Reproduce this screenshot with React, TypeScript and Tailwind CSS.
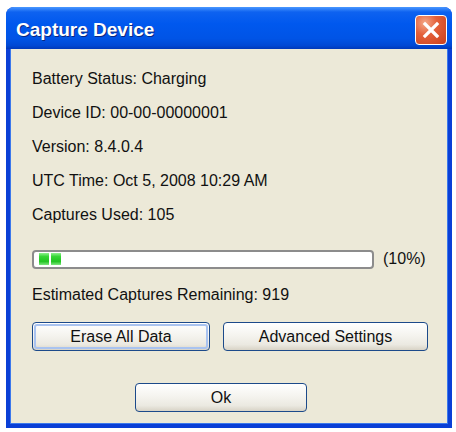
import React from "react";

const font = { fontFamily: '"Liberation Sans", Arial, sans-serif' };

function XpButton({ label, focused = false, className = "" }: { label: string; focused?: boolean; className?: string }) {
  return (
    <button
      type="button"
      className={`h-[29px] rounded-[4px] border border-[#1c4a8a] bg-[linear-gradient(180deg,#ffffff_0%,#f5f4ef_45%,#ebe9e1_80%,#d8d3c6_100%)] p-[1px] text-[16px] text-[#111] ${className}`}
    >
      <span
        className={`flex h-full w-full items-center justify-center rounded-[3px] ${
          focused ? "border-2 border-[#a9c3f0]" : "border-2 border-transparent"
        }`}
      >
        {label}
      </span>
    </button>
  );
}

function ProgressBar({ blocks }: { blocks: number }) {
  return (
    <div className="flex h-[19px] w-[342px] items-center gap-[2px] rounded-[4px] border-2 border-[#8c8c8c] bg-white px-[5px]">
      {Array.from({ length: blocks }).map((_, i) => (
        <div
          key={i}
          className="h-[12px] w-[10px] bg-[linear-gradient(180deg,#8ef08e_0%,#34d634_30%,#22c422_70%,#7ee67e_100%)]"
        />
      ))}
    </div>
  );
}

export default function App() {
  const rows = [
    "Battery Status: Charging",
    "Device ID: 00-00-00000001",
    "Version: 8.4.0.4",
    "UTC Time: Oct 5, 2008 10:29 AM",
    "Captures Used: 105",
  ];

  return (
    <div className="h-[432px] w-[456px] bg-white pl-[6px] pt-[7px]" style={font}>
      <div className="flex h-[421px] w-[446px] flex-col rounded-t-[8px] bg-[#0a3fd6]">
        {/* title bar */}
        <div className="flex h-[42px] items-start justify-between rounded-t-[8px] bg-[linear-gradient(180deg,#4a98ff_0%,#0e62f0_12%,#0058ee_40%,#0054e6_75%,#0048d4_92%,#0038b8_100%)] pl-[10px] pr-[5px]">
          <span className="mt-[13px] text-[19px] font-bold leading-none text-white [text-shadow:1px_1px_0_#0b2780]">
            Capture Device
          </span>
          <div className="mt-[8px] flex h-[30px] w-[32px] items-center justify-center rounded-[4px] border border-white bg-[radial-gradient(circle_at_30%_25%,#f4a98a_0%,#e4603a_40%,#c9401c_100%)]">
            <svg width="18" height="18" viewBox="0 0 18 18">
              <path d="M3 3 L15 15 M15 3 L3 15" stroke="white" strokeWidth="3.2" strokeLinecap="square" />
            </svg>
          </div>
        </div>

        {/* body */}
        <div className="mx-[4px] mb-[4px] flex flex-1 flex-col border-x border-b border-[#3b78ec] bg-[#ece9d8] pl-[21px] pt-[13px] text-[16px] text-[#111]">
          {rows.map((r) => (
            <div key={r} className="flex h-[34px] items-center">
              {r}
            </div>
          ))}

          <div className="mt-[15px] flex items-center gap-[9px]">
            <ProgressBar blocks={2} />
            <span>(10%)</span>
          </div>

          <div className="mt-[7px] flex h-[34px] items-center">Estimated Captures Remaining: 919</div>

          <div className="mt-[10px] flex gap-[13px]">
            <XpButton label="Erase All Data" focused className="w-[178px]" />
            <XpButton label="Advanced Settings" className="w-[205px]" />
          </div>

          <div className="ml-[103px] mt-[32px]">
            <XpButton label="Ok" className="w-[172px]" />
          </div>
        </div>
      </div>
    </div>
  );
}
